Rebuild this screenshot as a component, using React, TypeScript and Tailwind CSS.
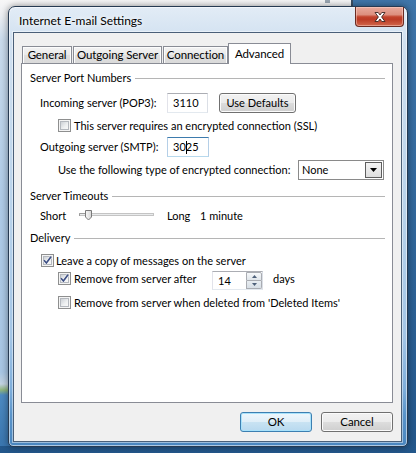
import React from "react";

function Checkbox({ checked }: { checked?: boolean }) {
  return (
    <div className="relative w-[13px] h-[13px] shrink-0 border border-[#8e8f8f] bg-[#f4f4f4] p-px">
      <div className="w-full h-full border border-[#b4b8be] bg-[linear-gradient(135deg,#cdd1d6,#eef0f1_60%,#f8f8f8)]" />
      {checked && (
        <svg className="absolute left-[-1px] top-[-1px]" width="13" height="13" viewBox="0 0 13 13">
          <polyline points="3,6.3 5.4,9 10,2.8" fill="none" stroke="#ffffff" strokeOpacity="0.6" strokeWidth="3" strokeLinejoin="round" />
          <polyline points="3,6.3 5.4,9 10,2.8" fill="none" stroke="#3d4f84" strokeWidth="1.7" strokeLinejoin="miter" />
        </svg>
      )}
    </div>
  );
}

const grayBtn =
  "flex items-center justify-center rounded-[3px] border border-[#707070] bg-[linear-gradient(#f2f2f2_0%,#ebebeb_50%,#dddddd_50%,#cfcfcf_100%)] shadow-[inset_0_0_0_1px_#fbfbfb]";

function GroupHeader({ children, className }: { children: React.ReactNode; className?: string }) {
  return (
    <div className={"flex items-center h-[14px] " + (className || "")}>
      <span className="whitespace-nowrap">{children}</span>
      <div className="flex-1 h-px bg-[#b5b5b5] ml-[4px]" />
    </div>
  );
}

function Tab({ w, active, children }: { w: string; active?: boolean; children: React.ReactNode }) {
  if (active) {
    return (
      <div className={"h-[21px] border border-b-0 border-[#898c95] bg-white flex items-center justify-center pb-[1px] " + w}>
        {children}
      </div>
    );
  }
  return (
    <div
      className={
        "h-[17px] mb-px border border-b-0 border-[#898c95] bg-[linear-gradient(#f3f3f3,#e9e9e9_50%,#dfdfdf_50%,#dadada)] shadow-[inset_1px_1px_0_#fcfcfc,inset_-1px_0_0_#fcfcfc] flex items-center justify-center " +
        w
      }
    >
      {children}
    </div>
  );
}

export default function App() {
  return (
    <div className="relative w-[416px] h-[453px] overflow-hidden bg-[linear-gradient(to_bottom,#3f76aa,#23578b)] font-[Lato,sans-serif] text-[11px] leading-[14px] text-black">
      {/* window behind */}
      <div className="absolute left-0 top-0 w-[353px] h-[446px] border-r-2 border-[#3a4f66] bg-[linear-gradient(to_bottom,#f7f7f7_0px,#eef0f3_14px,#cadbec_40px,#afcbe7_200px,#a8c6e4_372px,#c3d3e2_384px,#8fb57d_390px,#4d8ac2_395px,#3a76af_446px)]">
        <div className="ml-[325px] w-[5px] h-[3px] bg-[#9aa6b2]" />
      </div>

      {/* dialog window */}
      <div className="absolute left-[8px] top-[6px] w-[400px] h-[441px] rounded-t-[7px] rounded-b-[5px] border border-[#263a52] bg-[linear-gradient(to_bottom,#e2ecf6_0%,#d0e0f0_8%,#b9d3eb_45%,#a3c5e6_75%,#7eaedb_87%,#5994ca_93%,#4a86bf_100%)] shadow-[inset_0_0_0_1px_rgba(255,255,255,0.55),0_0_7px_rgba(0,0,0,0.45)] flex flex-col pl-[4px] pr-[5px] pb-[4px]">
        {/* title bar */}
        <div className="h-[25px] shrink-0 flex items-center pl-[6px] pt-[3px] text-[12px]">
          <span className="[text-shadow:0_0_8px_#ffffff,0_0_4px_#ffffff]">Internet E-mail Settings</span>
        </div>

        {/* close button */}
        <div className="absolute left-[346px] top-0 w-[49px] h-[20px] rounded-b-[4px] border border-t-0 border-[#6a2b22] bg-[linear-gradient(to_bottom,#e8aa9c_0%,#dc8f7e_40%,#c2432c_52%,#bb3b25_65%,#d2674c_100%)] shadow-[inset_0_0_0_1px_rgba(255,220,210,0.45)] flex items-center justify-center">
          <svg width="12" height="10" viewBox="0 0 12 10">
            <path d="M1,0.5 H4.2 L6,3 L7.8,0.5 H11 L7.6,5 L11,9.5 H7.8 L6,7 L4.2,9.5 H1 L4.4,5 Z" fill="#ffffff" stroke="#3b2622" strokeWidth="0.9" strokeLinejoin="round" />
          </svg>
        </div>

        {/* client area */}
        <div className="flex-1 border border-[#4a5f78] bg-[#f0f0f0] shadow-[0_0_0_1px_rgba(255,255,255,0.45)] flex flex-col pl-[7px] pr-[8px] pt-[10px] pb-[9px] text-[11.5px] tracking-[-0.1px]">
          {/* tabs */}
          <div className="relative z-10 flex items-end h-[21px] -mb-px ml-px">
            <Tab w="w-[50px]">General</Tab>
            <div className="w-px" />
            <Tab w="w-[89px]">Outgoing Server</Tab>
            <div className="w-px" />
            <Tab w="w-[65px]">Connection</Tab>
            <Tab w="w-[63px]" active>
              Advanced
            </Tab>
          </div>

          {/* panel */}
          <div className="h-[340px] border border-[#898c95] bg-white flex flex-col pl-[8px] pr-[7px] text-[11px] tracking-normal">
            <GroupHeader className="mt-[7px]">Server Port Numbers</GroupHeader>

            <div className="flex items-center h-[20px] mt-[8px] pl-[10px]">
              <span className="w-[127px] whitespace-nowrap">Incoming server (POP3):</span>
              <div className="w-[41px] h-[20px] border border-t-[#abadb3] border-l-[#e2e3ea] border-r-[#dbdfe6] border-b-[#e3e9ef] bg-white flex items-center pl-[5px]">
                3110
              </div>
              <div className={grayBtn + " ml-[11px] w-[77px] h-[20px]"}>Use Defaults</div>
            </div>

            <div className="flex items-center h-[13px] mt-[6px] pl-[28px]">
              <Checkbox />
              <span className="ml-[3px] whitespace-nowrap">This server requires an encrypted connection (SSL)</span>
            </div>

            <div className="flex items-center h-[20px] mt-[5px] pl-[10px]">
              <span className="w-[127px] whitespace-nowrap">Outgoing server (SMTP):</span>
              <div className="w-[42px] h-[20px] border border-t-[#3d7bad] border-l-[#b5cfe7] border-r-[#b5cfe7] border-b-[#b7d9ed] bg-white flex items-center pl-[5px]">
                <span>30</span>
                <span className="inline-block w-px h-[13px] bg-black -mr-px" />
                <span>25</span>
              </div>
            </div>

            <div className="flex items-center h-[20px] mt-[3px] pl-[28px]">
              <span className="w-[240px] whitespace-nowrap">Use the following type of encrypted connection:</span>
              <div className="flex w-[86px] h-[20px] border border-[#8a8a8a] bg-white p-px">
                <div className="flex-1 flex items-center pl-[2px]">None</div>
                <div className="w-[17px] h-full border border-[#5e5e5e] bg-[linear-gradient(#f4f4f4,#dedede)] flex items-center justify-center">
                  <svg width="7" height="4" viewBox="0 0 7 4">
                    <path d="M0,0 H7 L3.5,4 Z" fill="#000000" />
                  </svg>
                </div>
              </div>
            </div>

            <GroupHeader className="mt-[9px]">Server Timeouts</GroupHeader>

            <div className="flex items-center h-[20px] mt-[3px] pl-[10px]">
              <span className="w-[39px]">Short</span>
              <svg width="76" height="20" viewBox="0 0 76 20">
                <rect x="0.5" y="7.5" width="74" height="2" fill="#e9ebec" stroke="#c4c4c4" />
                <line x1="0.5" y1="7.5" x2="8" y2="7.5" stroke="#9c9c9c" />
                <line x1="0.5" y1="7.5" x2="0.5" y2="10" stroke="#9c9c9c" />
                <defs>
                  <linearGradient id="thumb" x1="0" y1="0" x2="1" y2="0">
                    <stop offset="0" stopColor="#f7f7f7" />
                    <stop offset="1" stopColor="#d6d6d6" />
                  </linearGradient>
                </defs>
                <path d="M6.5,4.5 H12.5 V11 L9.5,14 L6.5,11 Z" fill="url(#thumb)" stroke="#7a7a7a" />
              </svg>
              <span className="ml-[12px] w-[33px]">Long</span>
              <span className="whitespace-nowrap">1 minute</span>
            </div>

            <GroupHeader className="mt-[5px]">Delivery</GroupHeader>

            <div className="flex items-center h-[13px] mt-[9px] pl-[11px]">
              <Checkbox checked />
              <span className="ml-[2px] whitespace-nowrap">Leave a copy of messages on the server</span>
            </div>

            <div className="flex items-start h-[19px] mt-[4px] pl-[28px]">
              <div className="mt-px">
                <Checkbox checked />
              </div>
              <span className="ml-[3px] mt-px w-[138px] whitespace-nowrap">Remove from server after</span>
              <div className="flex w-[51px] h-[19px] border border-t-[#abadb3] border-l-[#e2e3ea] border-r-[#dbdfe6] border-b-[#e3e9ef] bg-white">
                <div className="flex-1 flex items-center pl-[5px]">14</div>
                <div className="w-[16px] flex flex-col">
                  <div className="h-[9px] border border-[#a9acb2] rounded-tr-[2px] bg-[linear-gradient(#f6f8fa,#dfe5ea)] flex items-center justify-center">
                    <svg width="5" height="3" viewBox="0 0 5 3">
                      <path d="M0,3 H5 L2.5,0 Z" fill="#4d6079" />
                    </svg>
                  </div>
                  <div className="h-[8px] border border-t-0 border-[#a9acb2] rounded-br-[2px] bg-[linear-gradient(#e8edf1,#d7dee5)] flex items-center justify-center">
                    <svg width="5" height="3" viewBox="0 0 5 3">
                      <path d="M0,0 H5 L2.5,3 Z" fill="#4d6079" />
                    </svg>
                  </div>
                </div>
              </div>
              <span className="ml-[10px] mt-px">days</span>
            </div>

            <div className="flex items-center h-[13px] mt-[6px] pl-[28px]">
              <Checkbox />
              <span className="ml-[3px] whitespace-nowrap">Remove from server when deleted from 'Deleted Items'</span>
            </div>
          </div>

          {/* buttons */}
          <div className="flex justify-end gap-[9px] mt-[9px]">
            <div className="w-[72px] h-[20px] flex items-center justify-center rounded-[3px] border border-[#3c7fb1] bg-[linear-gradient(#eef7fc_0%,#dfeef8_50%,#c9e3f3_50%,#b8d9ef_100%)] shadow-[inset_0_0_0_1px_#a8e2fb]">
              OK
            </div>
            <div className={grayBtn + " w-[72px] h-[20px]"}>Cancel</div>
          </div>
        </div>
      </div>
    </div>
  );
}
